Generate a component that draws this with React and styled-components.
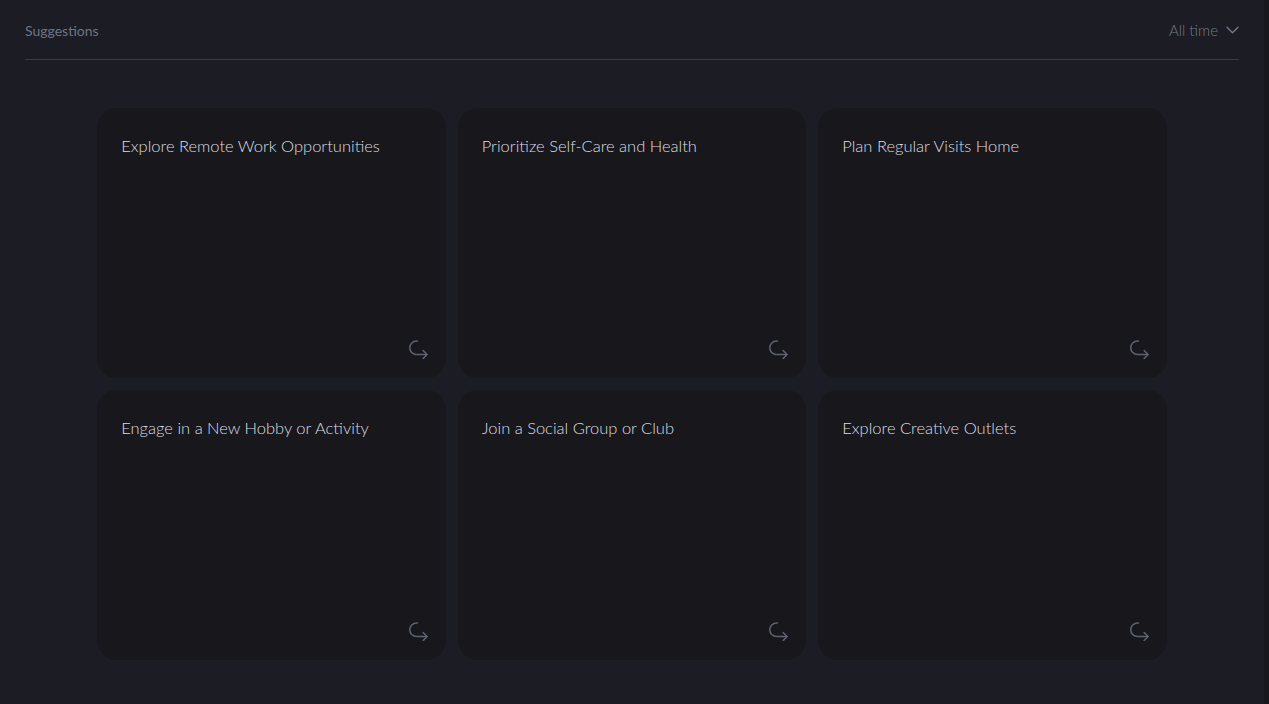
import styled, { createGlobalStyle } from "styled-components";

const Global = createGlobalStyle`
  html, body {
    margin: 0;
    padding: 0;
    background: #1c1c24;
  }
  body {
    font-family: "Lato", "Noto Sans", sans-serif;
  }
`

const Shell = styled.div`
  display: flex;
  height: 704px;
  background: #1c1c24;
`

const Main = styled.main`
  width: 1264px;
  padding: 0 25px;
  box-sizing: border-box;
`

const Edge = styled.div`
  flex: 1;
  background: #17171d;
`

const TopBar = styled.div`
  height: 60px;
  display: flex;
  align-items: center;
  justify-content: space-between;
  border-bottom: 1px solid #3a3a44;
  padding-top: 1px;
  box-sizing: border-box;
`

const Title = styled.div`
  font-size: 14px;
  color: #6f7585;
`

const RangePicker = styled.button`
  display: flex;
  align-items: center;
  gap: 8px;
  background: none;
  border: none;
  padding: 0;
  font-family: inherit;
  font-size: 15px;
  font-weight: 300;
  color: #747a8a;
  cursor: pointer;
`

const Grid = styled.div`
  display: grid;
  grid-template-columns: repeat(3, 348.5px);
  grid-auto-rows: 270px;
  gap: 12px;
  justify-content: center;
  margin-top: 48px;
`

const Card = styled.div`
  background: #17171c;
  border-radius: 20px;
  padding: 27px 18px 19px 24px;
  box-sizing: border-box;
  display: flex;
  flex-direction: column;
  justify-content: space-between;
  cursor: pointer;
`

const CardTitle = styled.div`
  font-size: 16.5px;
  font-weight: 300;
  color: #dcdde2;
  line-height: 22px;
`

const Action = styled.div`
  align-self: flex-end;
  width: 20px;
  height: 20px;
  color: #5d6270;
`

const items = [
  "Explore Remote Work Opportunities",
  "Prioritize Self-Care and Health",
  "Plan Regular Visits Home",
  "Engage in a New Hobby or Activity",
  "Join a Social Group or Club",
  "Explore Creative Outlets",
]

function ForwardIcon() {
  return (
    <svg width="20" height="20" viewBox="0 0 20 20" fill="none" stroke="currentColor" strokeWidth="1.6" strokeLinecap="round" strokeLinejoin="round">
      <path d="M9.5 2H8.5a6.75 6.75 0 0 0 0 13.5H19" />
      <path d="M15.2 11.5l3.8 4-3.8 4" />
    </svg>
  )
}

function Chevron() {
  return (
    <svg width="13" height="8" viewBox="0 0 13 8" fill="none" stroke="currentColor" strokeWidth="1.4" strokeLinecap="round" strokeLinejoin="round">
      <path d="M1 1.2l5.5 5.5 5.5-5.5" />
    </svg>
  )
}

export default function App() {
  return (
    <>
      <Global />
      <Shell>
        <Main>
          <TopBar>
            <Title>Suggestions</Title>
            <RangePicker>
              All time
              <Chevron />
            </RangePicker>
          </TopBar>
          <Grid>
            {items.map((text) => (
              <Card key={text}>
                <CardTitle>{text}</CardTitle>
                <Action>
                  <ForwardIcon />
                </Action>
              </Card>
            ))}
          </Grid>
        </Main>
        <Edge />
      </Shell>
    </>
  )
}
